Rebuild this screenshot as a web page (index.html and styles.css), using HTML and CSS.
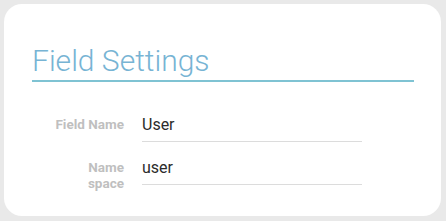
FILE: index.html
```html
<!DOCTYPE html>
<html>
<head>
<meta charset="utf-8">
<link rel="stylesheet" href="styles.css">
</head>
<body>
<div class="card">
  <h1 class="title">Field Settings</h1>
  <div class="form">
    <div class="row">
      <label class="label">Field Name</label>
      <div class="field">User</div>
    </div>
    <div class="row">
      <label class="label">Name<br>space</label>
      <div class="field">user</div>
    </div>
  </div>
</div>
</body>
</html>
```

FILE: styles.css
```css
html, body {
  margin: 0;
  padding: 0;
  background: #e9e9e9;
  width: 446px;
  height: 221px;
  overflow: hidden;
  font-family: Roboto, "Liberation Sans", sans-serif;
}
body {
  padding: 4px 5px 5px 4px;
  box-sizing: border-box;
}
.card {
  background: #ffffff;
  border-radius: 18px;
  height: 212px;
  box-sizing: border-box;
  padding: 39px 27px 0 28px;
}
.title {
  margin: 0;
  font-weight: 300;
  font-size: 30px;
  line-height: 36px;
  color: #77b4d4;
  border-bottom: 2px solid #7fc3d3;
  padding-bottom: 1px;
}
.form {
  padding-top: 33px;
  display: flex;
  flex-direction: column;
  gap: 16px;
}
.row {
  display: flex;
  align-items: flex-start;
}
.label {
  width: 92px;
  text-align: right;
  font-size: 13.5px;
  font-weight: 700;
  color: #bfbfbf;
  line-height: 16px;
  padding-top: 1px;
}
.field {
  margin-left: 18px;
  width: 220px;
  font-size: 16px;
  color: #2b2b2b;
  line-height: 20px;
  padding-bottom: 6px;
  border-bottom: 1px solid #dcdcdc;
}
```
